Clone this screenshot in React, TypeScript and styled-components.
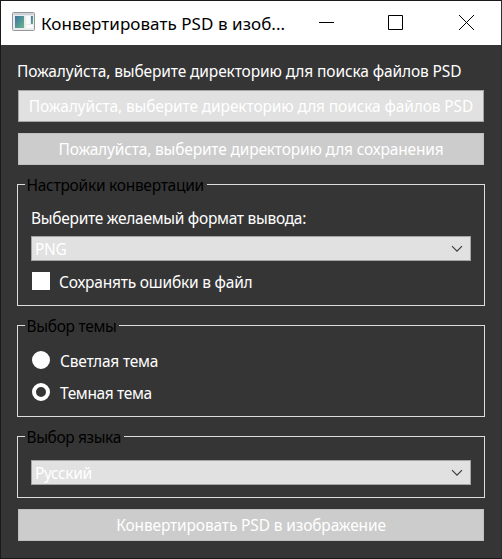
import React from "react";
import styled, { createGlobalStyle } from "styled-components";

const GlobalStyle = createGlobalStyle`
  * { box-sizing: border-box; }
  body { margin: 0; background: #353535; }
`;

const Window = styled.div`
  width: 502px;
  height: 559px;
  border: 1px solid #1c191c;
  border-right-color: #2b2d31;
  background: #353535;
  color: #fff;
  font: 15.5px/20px "Noto Sans", "Open Sans", sans-serif;
  white-space: nowrap;
  overflow: hidden;
`;

const TitleBar = styled.header`
  display: flex;
  align-items: center;
  height: 44px;
  padding-left: 11px;
  background: #fff;
  color: #000;
`;

const AppIcon = styled.svg`
  width: 23px;
  height: 19px;
  margin-top: -3px;
  flex: none;
`;

const Title = styled.h1`
  flex: 1;
  margin: 1px 0 0 6px;
  font-size: 17px;
  font-weight: 400;
  line-height: 24px;
  letter-spacing: 0.06px;
`;

const Controls = styled.div`
  display: flex;
  gap: 54px;
  margin-right: 26px;
`;

const ControlIcon = styled.svg`
  display: block;
  width: 16px;
  height: 16px;
  overflow: visible;
  fill: none;
  stroke: #000;
`;

const Content = styled.main`
  display: flex;
  flex-direction: column;
  padding: 16px 16px 0;
`;

const Text = styled.span<{ $spacing?: number }>`
  display: block;
  letter-spacing: ${(p) => p.$spacing ?? 0}px;
`;

const Button = styled.button<{ $muted?: boolean; $top: number }>`
  display: flex;
  justify-content: center;
  align-items: center;
  height: 32px;
  margin: ${(p) => p.$top}px 1px 0;
  padding: 0;
  border: 1px solid ${(p) => (p.$muted ? "#bfbfbf" : "#a5a5a5")};
  background: ${(p) => (p.$muted ? "#cccccc" : "#e1e1e1")};
  color: #fff;
  font: inherit;
`;

const Group = styled.section<{ $height: number }>`
  height: ${(p) => p.$height}px;
  margin-top: 19px;
  padding: 0 13px;
  border: 1px solid #dcdcdc;
`;

const Legend = styled.h2<{ $width: number; $spacing: number }>`
  width: ${(p) => p.$width}px;
  height: 20px;
  margin: -10px 0 0 -6px;
  padding-left: 1.5px;
  background: #353535;
  color: #000;
  font: inherit;
  letter-spacing: ${(p) => p.$spacing}px;
`;

const Field = styled.div<{ $top: number }>`
  margin-top: ${(p) => p.$top}px;
`;

const Select = styled.div`
  display: flex;
  justify-content: space-between;
  height: 25px;
  padding: 2px 7px 0 3px;
  border: 1px solid #a5a5a5;
  background: #e1e1e1;
`;

const Chevron = styled.svg`
  width: 12px;
  height: 8px;
  margin-top: 6px;
  fill: none;
  stroke: #3c3c3c;
  stroke-width: 1.2;
`;

const Option = styled.label<{ $top: number; $gap: number }>`
  display: flex;
  gap: ${(p) => p.$gap}px;
  height: 20px;
  margin: ${(p) => p.$top}px 0 0 1px;
`;

const CheckMark = styled.span`
  width: 18px;
  height: 18px;
  background: #fff;
`;

const RadioMark = styled.span<{ $checked?: boolean }>`
  width: 18px;
  height: 18px;
  border: 4px solid #fff;
  border-radius: 50%;
  background: ${(p) => (p.$checked ? "#353535" : "#fff")};
`;

function Combo({ value, spacing }: { value: string; spacing?: number }) {
  return (
    <Select>
      <Text $spacing={spacing}>{value}</Text>
      <Chevron viewBox="0 0 12 8">
        <path d="M1 1.2 6 6.2 11 1.2" />
      </Chevron>
    </Select>
  );
}

export default function App() {
  return (
    <Window>
      <GlobalStyle />
      <TitleBar>
        <AppIcon viewBox="0 0 23 19">
          <defs>
            <linearGradient id="screen" x1="0" y1="0" x2="1" y2="1">
              <stop offset="0" stopColor="#3d74a5" />
              <stop offset="1" stopColor="#68b787" />
            </linearGradient>
          </defs>
          <rect x=".5" y=".5" width="22" height="18" rx="1" fill="#e9ebed" stroke="#92979b" />
          <path d="M1.5 2h20" stroke="#cdd2d8" strokeWidth="2" />
          <rect x="3" y="4" width="9" height="12" fill="url(#screen)" />
          <path d="M14 4h4v8h-4zM14 13h7v3h-7z" fill="#fafafa" />
          <rect x="19" y="4" width="2" height="8" fill="url(#screen)" />
        </AppIcon>
        <Title>Конвертировать PSD в изоб...</Title>
        <Controls>
          <ControlIcon viewBox="0 0 16 16"><path d="M0 7.5h15" /></ControlIcon>
          <ControlIcon viewBox="0 0 16 16"><path d="M-.5 .5h14v14h-14z" /></ControlIcon>
          <ControlIcon viewBox="0 0 16 16"><path d="M0 0l15 15M15 0L0 15" /></ControlIcon>
        </Controls>
      </TitleBar>
      <Content>
        <Text $spacing={-0.12}>Пожалуйста, выберите директорию для поиска файлов PSD</Text>
        <Button $top={9}>
          <Text $spacing={-0.12}>Пожалуйста, выберите директорию для поиска файлов PSD</Text>
        </Button>
        <Button $top={11} $muted>
          <Text $spacing={-0.17}>Пожалуйста, выберите директорию для сохранения</Text>
        </Button>
        <Group $height={122}>
          <Legend $width={182} $spacing={-0.26}>Настройки конвертации</Legend>
          <Field $top={13}>
            <Text $spacing={-0.28}>Выберите желаемый формат вывода:</Text>
          </Field>
          <Field $top={8}>
            <Combo value="PNG" spacing={-0.3} />
          </Field>
          <Option $top={11} $gap={9}>
            <CheckMark />
            <Text $spacing={-0.21}>Сохранять ошибки в файл</Text>
          </Option>
        </Group>
        <Group $height={92}>
          <Legend $width={94} $spacing={-0.3}>Выбор темы</Legend>
          <Option $top={15} $gap={10}>
            <RadioMark />
            <Text $spacing={-0.2}>Светлая тема</Text>
          </Option>
          <Option $top={12} $gap={10}>
            <RadioMark $checked />
            <Text $spacing={-0.35}>Темная тема</Text>
          </Option>
        </Group>
        <Group $height={62}>
          <Legend $width={99} $spacing={-0.38}>Выбор языка</Legend>
          <Field $top={13}>
            <Combo value="Русский" spacing={-0.4} />
          </Field>
        </Group>
        <Button $top={11} $muted>
          <Text $spacing={-0.14}>Конвертировать PSD в изображение</Text>
        </Button>
      </Content>
    </Window>
  );
}
